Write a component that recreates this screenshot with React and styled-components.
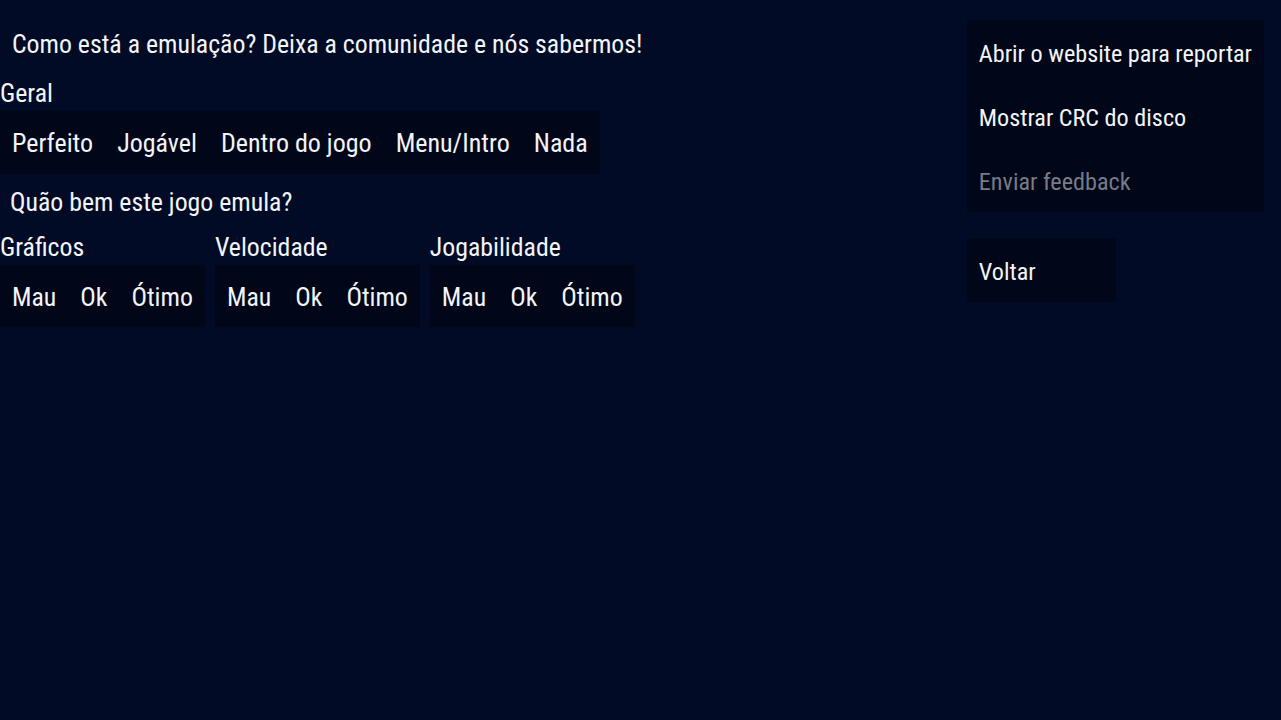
import React from "react";
import styled, { createGlobalStyle } from "styled-components";

const Global = createGlobalStyle`
  html, body { margin: 0; padding: 0; background: #010b26; }
  body { font-family: "Roboto Condensed", Roboto, "Liberation Sans", sans-serif; color: #f3f4f7; }
`;

const Screen = styled.div`
  width: 1281px;
  height: 720px;
  display: flex;
  justify-content: space-between;
  background: #010b26;
  overflow: hidden;
`;

const Main = styled.div`
  display: flex;
  flex-direction: column;
  align-items: flex-start;
  padding-top: 26px;
`;

const Heading = styled.div`
  font-size: 25.8px;
  line-height: 36px;
  padding-left: ${(p) => p.$indent}px;
  margin-top: ${(p) => p.$top || 0}px;
`;

const Label = styled.div`
  font-size: 25.8px;
  line-height: 30px;
  margin-top: ${(p) => p.$top || 0}px;
  margin-bottom: 3px;
`;

const Choices = styled.div`
  display: flex;
  align-items: center;
  height: ${(p) => p.$h || 62}px;
  padding-top: 1px;
  box-sizing: border-box;
  background: #010719;
`;

const Choice = styled.span`
  font-size: ${(p) => p.$size || 25.8}px;
  padding: 0 12px;
  white-space: nowrap;
`;

const Ratings = styled.div`
  display: flex;
  gap: 10px;
`;

const Rating = styled.div`
  display: flex;
  flex-direction: column;
  align-items: flex-start;
`;

const Side = styled.div`
  display: flex;
  flex-direction: column;
  align-items: flex-start;
  gap: 26px;
  padding: 20px 17px 0 0;
`;

const Menu = styled.div`
  display: flex;
  flex-direction: column;
  min-width: 149px;
  background: #010719;
`;

const MenuItem = styled.div`
  font-size: 24.2px;
  height: 64px;
  box-sizing: border-box;
  padding: 3px 12px 0;
  display: flex;
  align-items: center;
  white-space: nowrap;
  color: ${(p) => (p.$disabled ? "#767b86" : "#f3f4f7")};
`;

const general = ["Perfeito", "Jogável", "Dentro do jogo", "Menu/Intro", "Nada"];
const categories = ["Gráficos", "Velocidade", "Jogabilidade"];
const grades = ["Mau", "Ok", "Ótimo"];

export default function App() {
  return (
    <Screen>
      <Global />
      <Main>
        <Heading $indent={12}>Como está a emulação? Deixa a comunidade e nós sabermos!</Heading>
        <Label $top={16}>Geral</Label>
        <Choices $h={63}>
          {general.map((c) => (
            <Choice key={c} $size={26}>{c}</Choice>
          ))}
        </Choices>
        <Heading $indent={10} $top={10}>Quão bem este jogo emula?</Heading>
        <Ratings>
          {categories.map((cat) => (
            <Rating key={cat}>
              <Label $top={12}>{cat}</Label>
              <Choices>
                {grades.map((g) => (
                  <Choice key={g}>{g}</Choice>
                ))}
              </Choices>
            </Rating>
          ))}
        </Ratings>
      </Main>
      <Side>
        <Menu>
          <MenuItem>Abrir o website para reportar</MenuItem>
          <MenuItem>Mostrar CRC do disco</MenuItem>
          <MenuItem $disabled>Enviar feedback</MenuItem>
        </Menu>
        <Menu>
          <MenuItem>Voltar</MenuItem>
        </Menu>
      </Side>
    </Screen>
  );
}
